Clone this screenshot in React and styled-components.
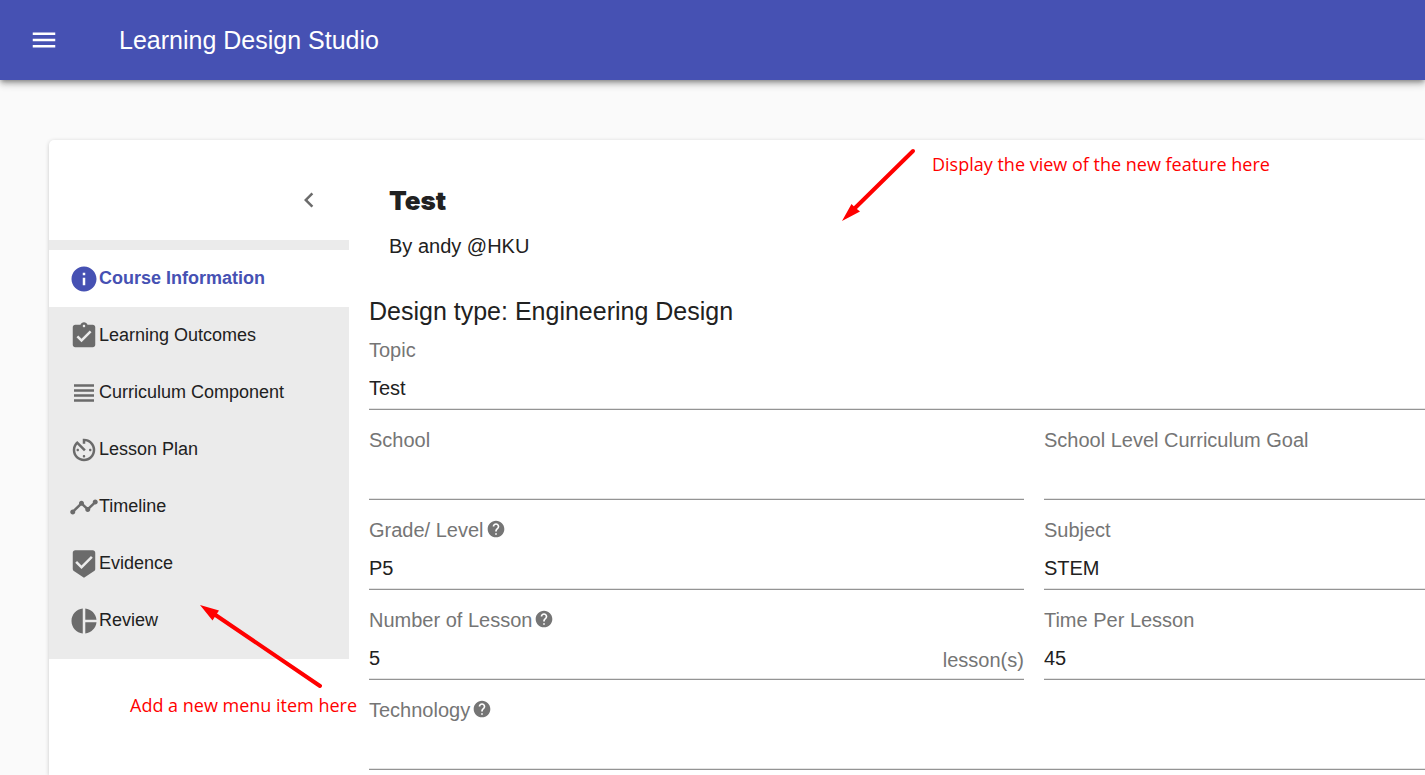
import React from "react";
import styled, { createGlobalStyle } from "styled-components";
import {
  MdMenu,
  MdChevronLeft,
  MdInfo,
  MdAssignmentTurnedIn,
  MdViewHeadline,
  MdAvTimer,
  MdTimeline,
  MdBeenhere,
  MdPieChart,
  MdHelp,
} from "react-icons/md";

const GlobalStyle = createGlobalStyle`
  *, *::before, *::after { box-sizing: border-box; }
  body {
    margin: 0;
    background: #fafafa;
    color: #212121;
    font-family: "Liberation Sans", Arial, sans-serif;
  }
`;

const Page = styled.div`
  position: relative;
  display: flex;
  flex-direction: column;
  min-height: 100vh;
  overflow: hidden;
`;

const AppBar = styled.header`
  display: flex;
  align-items: center;
  gap: 60px;
  height: 80px;
  padding: 0 29px;
  background: #4651b3;
  color: #fff;
  box-shadow: 0 2px 5px -1px rgba(0, 0, 0, 0.4), 0 5px 6px rgba(0, 0, 0, 0.14),
    0 1px 12px rgba(0, 0, 0, 0.12);
`;

const IconButton = styled.button`
  display: flex;
  padding: 0;
  border: 0;
  background: none;
  color: inherit;
  font-size: 30px;
  cursor: pointer;
`;

const AppTitle = styled.h1`
  margin: 0;
  font-size: 25px;
  line-height: 40px;
  font-weight: 400;
`;

const Card = styled.main`
  display: flex;
  flex: 1;
  margin: 60px 0 0 49px;
  border-radius: 5px 0 0 0;
  background: #fff;
  box-shadow: 0 1px 4px rgba(0, 0, 0, 0.2);
`;

const Sidebar = styled.aside`
  flex: none;
  width: 300px;
`;

const SidebarTop = styled.div`
  display: flex;
  align-items: center;
  justify-content: flex-end;
  height: 100px;
  padding: 20px 25px 0 0;
  color: #6b6b6b;
`;

const Menu = styled.nav`
  display: flex;
  flex-direction: column;
  padding: 10px 0;
  background: #ebebeb;
`;

const MenuItem = styled.a`
  display: flex;
  align-items: center;
  height: 57px;
  padding-left: 20px;
  background: ${(p) => (p.$active ? "#fff" : "transparent")};
  color: ${(p) => (p.$active ? "#4651b3" : "#212121")};
  font-size: 18px;
  line-height: 24px;
  font-weight: ${(p) => (p.$active ? 700 : 400)};
  text-decoration: none;

  svg {
    flex: none;
    width: 30px;
    height: 30px;
    color: ${(p) => (p.$active ? "#4651b3" : "#6b6b6b")};
  }
`;

const MenuLabel = styled.span`
  padding-bottom: 2px;
`;

const Content = styled.section`
  flex: 1;
  min-width: 0;
  padding: 40px 0 0 20px;
`;

const CourseHead = styled.div`
  padding: 0 20px;
`;

const CourseTitle = styled.h2`
  margin: 0;
  font-family: Inter, "Liberation Sans", sans-serif;
  font-size: 26px;
  line-height: 42px;
  font-weight: 900;
`;

const Author = styled.p`
  margin: 0;
  padding-top: 8px;
  font-size: 20px;
  line-height: 32px;
`;

const DesignType = styled.h3`
  margin: 0;
  padding-top: 30px;
  font-size: 25px;
  line-height: 38px;
  font-weight: 400;
`;

const Form = styled.form`
  display: grid;
  grid-template-columns: minmax(0, 55fr) minmax(0, 32fr);
  gap: 10px 20px;
`;

const Field = styled.div`
  grid-column: ${(p) => (p.$wide ? "1 / -1" : "auto")};
  display: flex;
  flex-direction: column;
  height: 80px;
`;

const LabelRow = styled.div`
  display: flex;
  align-items: center;
  gap: 2px;
  height: 40px;
  color: #757575;
  font-size: 20px;
  line-height: 24px;
`;

const HelpIcon = styled(MdHelp)`
  margin-bottom: 2px;
`;

const InputRow = styled.div`
  display: flex;
  flex: 1;
  border-bottom: 1px solid #949494;
  box-shadow: inset 0 -1px #e4e4e4;
`;

const Input = styled.input`
  flex: 1;
  min-width: 0;
  padding: 0 0 3px;
  border: 0;
  outline: 0;
  background: none;
  color: #212121;
  font: 20px/24px "Liberation Sans", Arial, sans-serif;
`;

const Unit = styled.span`
  padding-top: 8px;
  color: #757575;
  font-size: 20px;
  line-height: 24px;
`;

const Arrows = styled.svg`
  position: absolute;
  top: 0;
  left: 0;
  pointer-events: none;
`;

const Note = styled.p`
  position: absolute;
  top: ${(p) => p.$top}px;
  left: ${(p) => p.$left}px;
  margin: 0;
  color: #f00;
  font-family: "Open Sans", "Noto Sans", sans-serif;
  font-size: 18px;
  line-height: 24px;
  white-space: nowrap;
`;

const menu = [
  { label: "Course Information", Icon: MdInfo, active: true },
  { label: "Learning Outcomes", Icon: MdAssignmentTurnedIn },
  { label: "Curriculum Component", Icon: MdViewHeadline },
  { label: "Lesson Plan", Icon: MdAvTimer },
  { label: "Timeline", Icon: MdTimeline },
  { label: "Evidence", Icon: MdBeenhere },
  { label: "Review", Icon: MdPieChart },
];

const fields = [
  { id: "topic", label: "Topic", value: "Test", wide: true },
  { id: "school", label: "School", value: "" },
  { id: "goal", label: "School Level Curriculum Goal", value: "" },
  { id: "grade", label: "Grade/ Level", value: "P5", help: true },
  { id: "subject", label: "Subject", value: "STEM" },
  { id: "lessons", label: "Number of Lesson", value: "5", help: true, unit: "lesson(s)" },
  { id: "time", label: "Time Per Lesson", value: "45" },
  { id: "technology", label: "Technology", value: "", help: true, wide: true },
];

export default function App() {
  return (
    <Page>
      <GlobalStyle />
      <AppBar>
        <IconButton type="button" aria-label="Open menu">
          <MdMenu />
        </IconButton>
        <AppTitle>Learning Design Studio</AppTitle>
      </AppBar>
      <Card>
        <Sidebar>
          <SidebarTop>
            <IconButton type="button" aria-label="Collapse sidebar">
              <MdChevronLeft />
            </IconButton>
          </SidebarTop>
          <Menu>
            {menu.map(({ label, Icon, active }) => (
              <MenuItem key={label} href="#" $active={active}>
                <Icon />
                <MenuLabel>{label}</MenuLabel>
              </MenuItem>
            ))}
          </Menu>
        </Sidebar>
        <Content>
          <CourseHead>
            <CourseTitle>Test</CourseTitle>
            <Author>By andy @HKU</Author>
          </CourseHead>
          <DesignType>Design type: Engineering Design</DesignType>
          <Form>
            {fields.map((f) => (
              <Field key={f.id} $wide={f.wide}>
                <LabelRow>
                  <label htmlFor={f.id}>{f.label}</label>
                  {f.help && <HelpIcon />}
                </LabelRow>
                <InputRow>
                  <Input id={f.id} type="text" defaultValue={f.value} />
                  {f.unit && <Unit>{f.unit}</Unit>}
                </InputRow>
              </Field>
            ))}
          </Form>
        </Content>
      </Card>
      <Arrows width="930" height="700" viewBox="0 0 930 700" fill="#f00" aria-hidden="true">
        <path d="M913 151L854 209" stroke="#f00" strokeWidth="4" strokeLinecap="round" />
        <path d="M842 221L851.5 204L855 207.500L860 211.500Z" />
        <path d="M320 686L214 614" stroke="#f00" strokeWidth="4" strokeLinecap="round" />
        <path d="M200 605L219 610.500L216 615L212.500 620.500Z" />
      </Arrows>
      <Note $top={152} $left={932}>Display the view of the new feature here</Note>
      <Note $top={693} $left={130}>Add a new menu item here</Note>
    </Page>
  );
}
